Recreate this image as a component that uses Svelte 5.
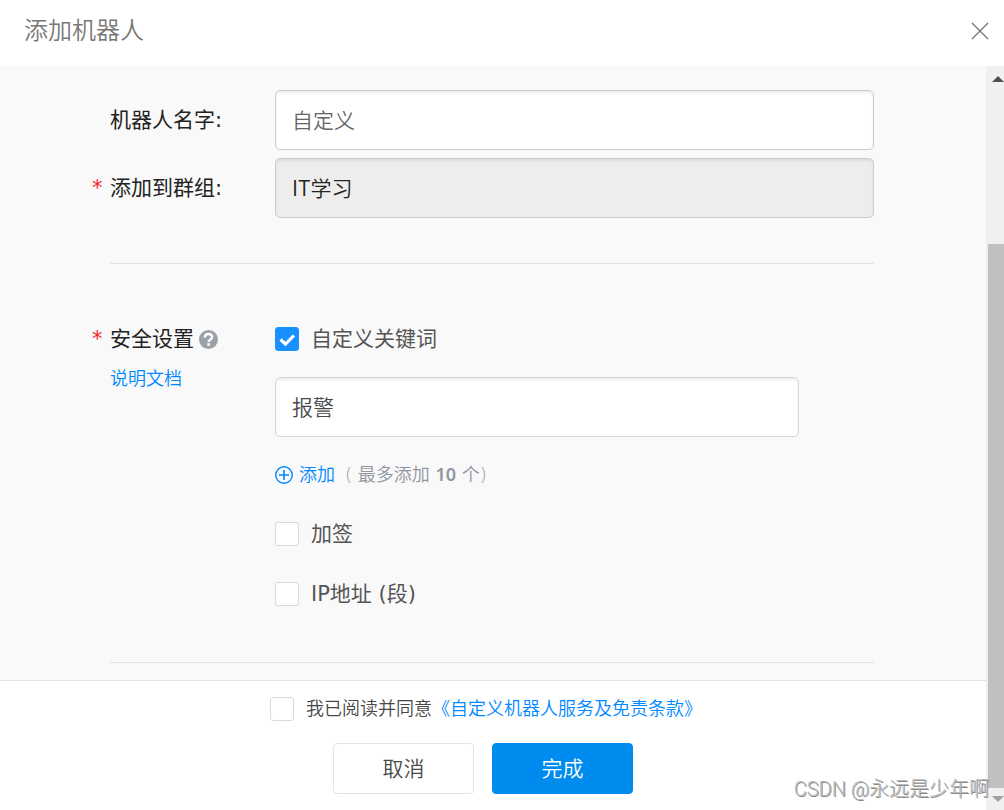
<script>
  let name = $state('');
  let group = $state('IT学习');
  let keyword = $state('报警');
  let useKeyword = $state(true);
  let useSign = $state(false);
  let useIp = $state(false);
  let agreed = $state(false);
</script>

{#snippet checkmark()}
  <svg class="tick" viewBox="0 0 24 24" aria-hidden="true">
    <path d="M5.5 12.5l5 4.6 8.4-8.6" fill="none" stroke="#fff" stroke-width="3.2" />
  </svg>
{/snippet}

<div class="dialog">
  <header>
    <h1>添加机器人</h1>
    <button class="close" type="button" aria-label="关闭">
      <svg width="18" height="18" viewBox="0 0 18 18"><path d="M1 1l16 16M17 1L1 17" stroke="#777" stroke-width="1.3" /></svg>
    </button>
  </header>

  <div class="body">
    <main>
      <form class="settings">
        <div class="row">
          <label class="label" for="name">机器人名字:</label>
          <input class="text" id="name" type="text" placeholder="自定义" bind:value={name} />
        </div>
        <div class="row">
          <label class="label required" for="group">添加到群组:</label>
          <input class="text" id="group" type="text" disabled bind:value={group} />
        </div>

        <hr />

        <div class="row security">
          <div class="side">
            <div class="label required">
              安全设置
              <svg class="help" width="19" height="19" viewBox="0 0 19 19" aria-hidden="true">
                <circle cx="9.5" cy="9.5" r="9.5" fill="#9ba1a8" />
                <path d="M5.9 7.6c0-4.7 7.2-4.6 7.2-.5 0 2.3-3.5 2.4-3.5 4.9" fill="none" stroke="#fff" stroke-width="2.4" />
                <path d="M8.3 13.2h2.6v2.5H8.3z" fill="#fff" />
              </svg>
            </div>
            <a class="doc" href="#doc">说明文档</a>
          </div>

          <div class="options">
            <label class="option">
              <span class="box"><input type="checkbox" bind:checked={useKeyword} />{#if useKeyword}{@render checkmark()}{/if}</span>
              自定义关键词
            </label>
            <input class="text keyword" type="text" aria-label="关键词" bind:value={keyword} />
            <div class="add-line">
              <button class="add" type="button">
                <svg width="18" height="18" viewBox="0 0 18 18" aria-hidden="true">
                  <circle cx="9" cy="9" r="8.3" fill="none" stroke="#0089ff" stroke-width="1.4" />
                  <path d="M9 4v10M4 9h10" stroke="#0089ff" stroke-width="1.6" />
                </svg>
                添加
              </button>
              <span class="hint">( 最多添加 <b>10</b> 个)</span>
            </div>
            <label class="option">
              <span class="box"><input type="checkbox" bind:checked={useSign} />{#if useSign}{@render checkmark()}{/if}</span>
              加签
            </label>
            <label class="option">
              <span class="box"><input type="checkbox" bind:checked={useIp} />{#if useIp}{@render checkmark()}{/if}</span>
              IP地址 (段)
            </label>
          </div>
        </div>

        <hr class="last" />
      </form>

      <footer>
        <div class="agree">
          <label>
            <span class="box"><input type="checkbox" bind:checked={agreed} />{#if agreed}{@render checkmark()}{/if}</span>
            我已阅读并同意
          </label>
          <a href="#terms">《自定义机器人服务及免责条款》</a>
        </div>
        <div class="actions">
          <button class="btn" type="button">取消</button>
          <button class="btn primary" type="button">完成</button>
        </div>
      </footer>
    </main>

    <div class="scrollbar" aria-hidden="true">
      <div class="arrow up"></div>
      <div class="track"></div>
      <div class="thumb"></div>
      <div class="arrow down"></div>
    </div>
  </div>

  <div class="watermark">CSDN @永远是少年啊</div>
</div>

<style>
  :global(body) {
    margin: 0;
    background: #fff;
  }

  .dialog {
    position: relative;
    display: flex;
    flex-direction: column;
    min-height: 100vh;
    overflow: hidden;
    font-family: "DejaVu Sans", "Noto Sans CJK SC", sans-serif;
    font-size: 21px;
    font-weight: 350;
    line-height: 24px;
    color: #484848;
  }

  .dialog * {
    box-sizing: border-box;
  }

  input,
  button {
    margin: 0;
    font: inherit;
    color: inherit;
  }

  button {
    padding: 0;
    border: 0;
    background: none;
    cursor: pointer;
  }

  a {
    color: #0089ff;
    text-decoration: none;
  }

  header {
    display: flex;
    align-items: center;
    justify-content: space-between;
    height: 66px;
    padding: 0 15px 4px 24px;
  }

  h1 {
    margin: 0;
    font-size: 24px;
    font-weight: 350;
    color: #777;
  }

  .close {
    display: flex;
  }

  .body {
    display: flex;
    flex: 1;
  }

  main {
    display: flex;
    flex: 1;
    flex-direction: column;
  }

  .settings {
    padding: 24px 112px 17px 110px;
    background: #f9f9f9;
  }

  .row {
    display: flex;
    align-items: center;
    margin-bottom: 8px;
  }

  .label {
    position: relative;
    flex: none;
    width: 165px;
    color: #222;
    font-weight: 400;
  }

  .required::before {
    content: "*";
    position: absolute;
    left: -18px;
    color: #f5222d;
  }

  .text {
    flex: 1;
    min-width: 0;
    height: 60px;
    padding: 0 16px 2px;
    border: 1px solid #ccc;
    border-radius: 5px;
    background: #fff;
    box-shadow: inset 0 2px 3px rgba(0, 0, 0, 0.08);
    font-family: "Noto Sans CJK SC", sans-serif;
    outline: none;
  }

  .text::placeholder {
    color: #666;
    opacity: 1;
  }

  .text:disabled {
    background: #ededed;
    color: #222;
  }

  hr {
    height: 1px;
    margin: 45px 0 63px;
    border: 0;
    background: #e3e3e3;
  }

  hr.last {
    margin: 56px 0 0;
  }

  .row.security {
    align-items: flex-start;
    margin-bottom: 0;
  }

  .side {
    flex: none;
    width: 165px;
  }

  .side .label {
    display: flex;
    align-items: center;
    gap: 5px;
  }

  .doc {
    display: block;
    margin-top: 16px;
    font-size: 18px;
  }

  .options {
    display: flex;
    flex: 1;
    flex-direction: column;
  }

  .option {
    display: flex;
    align-items: center;
    gap: 12px;
    margin-bottom: 36px;
    font-weight: 400;
    color: #555;
  }

  .option:first-child {
    margin-bottom: 26px;
  }

  .option:last-child {
    margin-bottom: 0;
  }

  .box {
    position: relative;
    flex: none;
    width: 24px;
    height: 24px;
  }

  .box input {
    display: block;
    width: 24px;
    height: 24px;
    border: 1px solid #d9d9d9;
    border-radius: 3px;
    background: #fff;
    appearance: none;
  }

  .box input:checked {
    border-color: #1890ff;
    background: #1890ff;
  }

  .tick {
    position: absolute;
    inset: 0;
    pointer-events: none;
  }

  .keyword {
    flex: none;
    margin-right: 75px;
    border-color: #d9d9d9;
  }

  .add-line {
    display: flex;
    gap: 10px;
    height: 24px;
    margin: 26px 0 35px;
    font-size: 18px;
    color: #9096a0;
  }

  .add {
    display: flex;
    align-items: center;
    gap: 6px;
    color: #0089ff;
  }

  .hint b {
    font-family: "Noto Sans", sans-serif;
    font-weight: 600;
    line-height: 1;
  }

  footer {
    flex: 1;
    padding: 16px 20px 16px 0;
    border-top: 1px solid #e3e3e3;
    background: #fff;
  }

  .agree {
    display: flex;
    align-items: center;
    justify-content: center;
    padding-left: 6px;
    font-size: 18px;
  }

  .agree label {
    display: flex;
    align-items: center;
    gap: 12px;
  }

  .actions {
    display: flex;
    justify-content: center;
    gap: 18px;
    margin-top: 22px;
  }

  .btn {
    width: 141px;
    height: 51px;
    border: 1px solid #e3e3e3;
    border-radius: 4px;
    background: #fff;
  }

  .btn.primary {
    border-color: #008cee;
    background: #008cee;
    color: #fff;
  }

  .scrollbar {
    display: flex;
    flex: none;
    flex-direction: column;
    width: 18px;
    padding-left: 2px;
    overflow: hidden;
    background: #f0f0f0;
  }

  .track {
    flex: 156;
  }

  .thumb {
    flex: 544;
    background: #c0c0c0;
  }

  .arrow {
    display: flex;
    flex: none;
    align-items: center;
    height: 22px;
    padding-left: 4px;
  }

  .arrow::before {
    content: "";
    border: 6px solid transparent;
  }

  .up::before {
    border-top-width: 0;
    border-bottom-color: #505050;
  }

  .up {
    padding-top: 4px;
  }

  .down::before {
    border-bottom-width: 0;
    border-top-color: #a0a0a0;
  }

  .watermark {
    position: absolute;
    right: 15px;
    bottom: 9px;
    font-family: Roboto, "Noto Sans CJK SC", sans-serif;
    font-size: 20px;
    font-weight: 300;
    color: #bbb;
    text-shadow: 1px 1px 0 #888;
    white-space: nowrap;
  }
</style>
